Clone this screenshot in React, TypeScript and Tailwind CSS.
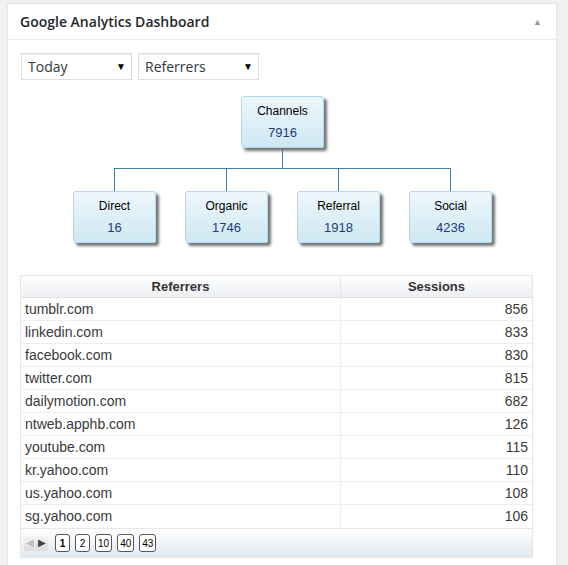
import React from 'react';

const children = [
  { label: 'Direct', value: 16 },
  { label: 'Organic', value: 1746 },
  { label: 'Referral', value: 1918 },
  { label: 'Social', value: 4236 },
];

const rows: [string, number][] = [
  ['tumblr.com', 856],
  ['linkedin.com', 833],
  ['facebook.com', 830],
  ['twitter.com', 815],
  ['dailymotion.com', 682],
  ['ntweb.apphb.com', 126],
  ['youtube.com', 115],
  ['kr.yahoo.com', 110],
  ['us.yahoo.com', 108],
  ['sg.yahoo.com', 106],
];

const pages = ['1', '2', '10', '40', '43'];

const Node: React.FC<{ label: string; value: number }> = ({ label, value }) => (
  <div className="w-[83px] h-[52px] rounded-[3px] border border-[#b5d9ea] bg-gradient-to-b from-[#edf7fb] to-[#cfe8f3] shadow-[3px_3px_3px_rgba(0,0,0,0.55)] flex flex-col items-center pt-[7px] font-['Liberation_Sans',Arial,sans-serif]">
    <span className="text-[12px] leading-[14px] text-black">{label}</span>
    <span className="mt-[7px] text-[13px] leading-[15px] text-[#1f3a80]">{value}</span>
  </div>
);

const Select: React.FC<{ label: string; width: string }> = ({ label, width }) => (
  <div className={`${width} h-[27px] border border-[#ddd] bg-white shadow-[inset_0_1px_2px_rgba(0,0,0,0.07)] flex items-center justify-between pl-[6px] pr-[5px] text-[14px] text-[#32373c] font-['Open_Sans',sans-serif]`}>
    <span>{label}</span>
    <span className="text-[10px] text-black">▼</span>
  </div>
);

export default function App() {
  return (
    <div className="w-[568px] h-[565px] bg-[#f1f1f1] overflow-hidden pt-[3px] pl-[7px]">
      <div className="w-[550px] h-[580px] bg-white border border-[#e5e5e5] shadow-[0_1px_1px_rgba(0,0,0,0.04)]">
        <div className="h-[36px] border-b border-[#eee] flex items-center justify-between pl-[12px] pr-[14px]">
          <span className="text-[14px] font-semibold text-[#23282d] font-['Open_Sans',sans-serif]">Google Analytics Dashboard</span>
          <span className="text-[9px] text-[#999]">▲</span>
        </div>
        <div className="px-[12px] pt-[13px]">
          <div className="flex gap-[6px] ml-[1px]">
            <Select label="Today" width="w-[111px]" />
            <Select label="Referrers" width="w-[121px]" />
          </div>

          <div className="mt-[16px] flex flex-col items-center pl-[1px]">
            <Node label="Channels" value={7916} />
            <div className="w-px h-[20px] bg-[#3d7fa3]" />
            <div className="flex">
              {children.map((c, i) => (
                <div key={c.label} className="w-[112px] flex flex-col items-center">
                  <div className="w-full h-px flex">
                    <div className={`flex-1 ${i === 0 ? '' : 'bg-[#3d7fa3]'}`} />
                    <div className="w-px bg-[#3d7fa3]" />
                    <div className={`flex-1 ${i === children.length - 1 ? '' : 'bg-[#3d7fa3]'}`} />
                  </div>
                  <div className="w-px h-[22px] bg-[#3d7fa3]" />
                  <Node label={c.label} value={c.value} />
                </div>
              ))}
            </div>
          </div>

          <div className="mt-[32px] w-[513px] border border-[#e6e6e6] font-['Liberation_Sans',Arial,sans-serif]">
            <div className="flex h-[22px] bg-gradient-to-b from-white to-[#edeff3] border-b border-[#e0e0e0] text-[13px] font-bold text-[#333]">
              <div className="w-[320px] border-r border-[#e4e4e4] flex items-center justify-center">Referrers</div>
              <div className="flex-1 flex items-center justify-center">Sessions</div>
            </div>
            {rows.map(([site, n], i) => (
              <div key={site} className={`flex h-[23px] text-[14px] text-[#3a3a3a] ${i < rows.length - 1 ? 'border-b border-[#eee]' : ''}`}>
                <div className="w-[320px] border-r border-[#eee] flex items-center pl-[4px]">{site}</div>
                <div className="flex-1 flex items-center justify-end pr-[4px]">{n}</div>
              </div>
            ))}
            <div className="h-[29px] bg-gradient-to-b from-white to-[#e2e9f1] border-t border-[#e6e6e6] flex items-center pl-[3px] gap-[7px]">
              <div className="flex items-center h-[15px] bg-gradient-to-b from-[#f4f4f4] to-[#dcdcdc]">
                <span className="w-[12px] flex justify-center text-[10px] leading-none text-[#c0c0c0]">◀</span>
                <span className="w-[12px] flex justify-center text-[10px] leading-none text-[#444]">▶</span>
              </div>
              <div className="flex gap-[5px]">
                {pages.map((p, i) => (
                  <div key={p} className={`h-[18px] min-w-[15px] px-[2px] rounded-[3px] border border-[#555] bg-white flex items-center justify-center text-[10px] text-black ${i === 0 ? 'font-bold' : ''}`}>
                    {p}
                  </div>
                ))}
              </div>
            </div>
          </div>
        </div>
      </div>
    </div>
  );
}
